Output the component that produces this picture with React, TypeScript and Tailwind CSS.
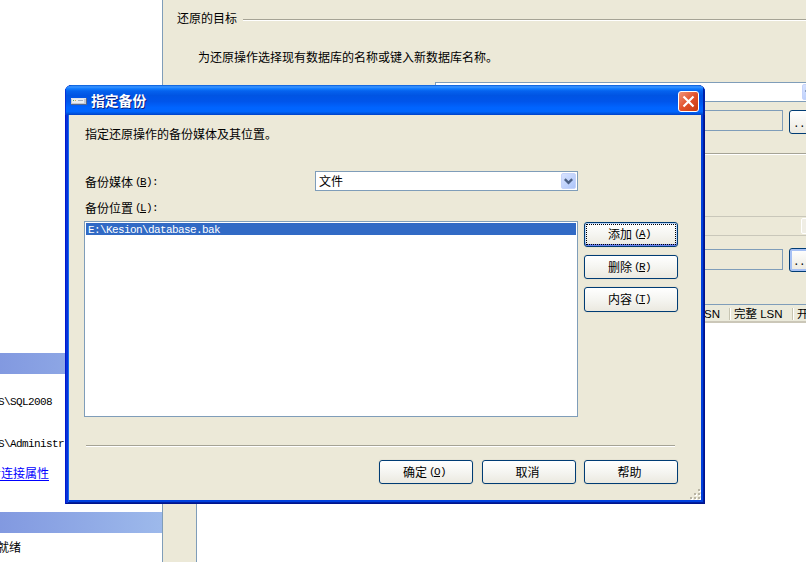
import type { ReactNode } from "react";
import clsx from "clsx";

const columns = ["完整 LSN", "开始日期"];

function Latin({ children }: { children: ReactNode }) {
  return (
    <span className="inline-block -translate-y-px font-['Liberation_Mono','Noto_Sans_CJK_SC',monospace] text-[11px] tracking-[-0.6px]">
      {children}
    </span>
  );
}

function Mnemonic({ letter, suffix = "" }: { letter: string; suffix?: string }) {
  return (
    <Latin>
      <span className="-mr-px">(</span>
      <span className="underline underline-offset-1">{letter}</span>){suffix}
    </Latin>
  );
}

function Etched({ className = "" }: { className?: string }) {
  return <div className={clsx("h-[2px] border-t border-b border-t-[#a5a395] border-b-white", className)} />;
}

type XpButtonProps = {
  label: string;
  letter?: string;
  focused?: boolean;
  className?: string;
};

function XpButton({ label, letter, focused, className }: XpButtonProps) {
  return (
    <button
      type="button"
      className={clsx(
        "flex w-[94px] shrink-0 items-center justify-center rounded-[3px] border border-[#003c74] bg-linear-to-b from-white via-[#f5f5f1] to-[#ebe9e0] p-px",
        focused
          ? "shadow-[0_0_0_1px_#e5e2d2,inset_0_-2px_0_#6982ee,inset_0_0_0_1px_#bcd4f6]"
          : "shadow-[0_0_0_1px_#e5e2d2]",
        className,
      )}
    >
      <span
        className={clsx(
          "flex h-full w-full items-center justify-center pr-[3px] pb-px",
          focused && "border border-dotted border-black",
        )}
      >
        {label}
        {letter && <span className="ml-[2px]"><Mnemonic letter={letter} /></span>}
      </span>
    </button>
  );
}

function DropArrow() {
  return (
    <span className="flex h-4 w-[15px] shrink-0 items-center justify-center rounded-[2px] border border-[#c5d3fa] bg-linear-to-br from-[#d8e3ff] to-[#adc5f9]">
      <svg className="shrink-0" width="9" height="7" viewBox="0 0 9 7" fill="none" stroke="#4d6185" strokeWidth="2.4">
        <path d="M0.8 1.2 4.5 4.9 8.2 1.2" />
      </svg>
    </span>
  );
}

function BrowseButton({ focused }: { focused?: boolean }) {
  return (
    <div
      className={clsx(
        "ml-[6px] h-6 w-[30px] shrink-0 rounded-[3px] border border-[#003c74] bg-linear-to-b from-white to-[#ebe9e0] pl-[3px] leading-[23px]",
        focused && "shadow-[inset_0_0_0_2px_#a6c0f4]",
      )}
    >
      <Latin>...</Latin>
    </div>
  );
}

function ConnectionPane() {
  return (
    <aside className="flex w-[163px] shrink-0 flex-col overflow-hidden border-r border-[#7f9db9] bg-white pt-[353px] whitespace-nowrap">
      <div className="h-[21px] shrink-0 bg-linear-to-r from-[#8299e0] to-[#9db9eb]" />
      <div className="mt-[19px] -ml-[2px] h-4 leading-4"><Latin>S\SQL2008</Latin></div>
      <div className="mt-[26px] -ml-[2px] h-4 leading-4"><Latin>S\Administr</Latin></div>
      <a className="mt-[14px] -ml-[11px] h-4 leading-4 text-[#0000ff] underline underline-offset-2">看连接属性</a>
      <div className="mt-[31px] h-[21px] shrink-0 bg-linear-to-r from-[#8299e0] to-[#9db9eb]" />
      <div className="mt-[6px] -ml-[3px] h-4 leading-4">就绪</div>
    </aside>
  );
}

function RestorePane() {
  return (
    <section className="flex min-w-0 flex-1 flex-col whitespace-nowrap">
      <div className="flex h-[21px] items-end pl-[14px]">
        <span className="mr-[6px] -mb-[5px] h-4 w-[60px] leading-4">还原的目标</span>
        <Etched className="flex-1" />
      </div>
      <p className="mt-[28px] h-4 pl-[35px] leading-4">为还原操作选择现有数据库的名称或键入新数据库名称。</p>

      <div className="mt-[17px] ml-[272px] flex h-5 w-[383px] border border-[#7f9db9] bg-white pt-px">
        <span className="flex-1" />
        <DropArrow />
      </div>

      <div className="mt-2 ml-[272px] flex h-6 w-[384px]">
        <div className="h-[21px] w-[348px] shrink-0 border border-[#7f9db9]" />
        <BrowseButton />
      </div>

      <Etched className="mt-[19px]" />

      <div className="mt-[61px] ml-[272px] flex h-5 w-[384px] border border-[#c9c7ba]">
        <span className="flex-1" />
        <span className="mt-px flex h-4 w-[17px] items-center rounded-[2px] border border-white bg-[#f0eee5] pl-1">
          <svg width="9" height="7" viewBox="0 0 9 7" fill="none" stroke="#c9c7ba" strokeWidth="2">
            <path d="M1 1.2 4.5 4.7 8 1.2" />
          </svg>
        </span>
      </div>

      <div className="mt-3 ml-[272px] flex h-[25px] w-[384px]">
        <div className="mt-px h-[21px] w-[348px] shrink-0 border border-[#7f9db9]" />
        <BrowseButton focused />
      </div>

      <div className="mt-[31px] ml-[33px] flex-1 border-t border-l border-[#7f9db9] bg-white">
        <div className="flex h-[18px] items-center overflow-hidden border-b-2 border-[#cbc7b8] bg-[#ebeadb] pt-[2px] font-['Liberation_Sans','Noto_Sans_CJK_SC',sans-serif] text-[11.5px] leading-[14px]">
          <span className="w-[523px] shrink-0 text-right">第一个 LSN</span>
          {columns.map((column, i) => (
            <span
              key={column}
              className={clsx(
                "flex h-3 shrink-0 items-center border-l border-[#c7c5b2] pl-1 shadow-[inset_1px_0_0_#ffffff]",
                i === 0 ? "ml-[9px] w-[63px]" : "w-20",
              )}
            >
              {column}
            </span>
          ))}
        </div>
      </div>
    </section>
  );
}

function DriveIcon() {
  return (
    <svg width="16" height="8" viewBox="0 0 16 8">
      <path d="M0 0h15v1H0z" fill="#dfe3ec" />
      <path d="M0 1h15v5H0z" fill="#c3c8d2" />
      <path d="M1 1h12v4H1z" fill="#e9edf2" />
      <path d="M15 0h1v7H0V6h15z" fill="#56678d" />
      <path d="M2 2h1v1H2z" fill="#4fa35c" />
      <path d="M4 2h1v1H4z" fill="#d9b23c" />
      <path d="M7 2h5v1H7z" fill="#a3adbf" />
    </svg>
  );
}

function SizeGrip() {
  const dots = [[8, 0], [4, 4], [8, 4], [0, 8], [4, 8], [8, 8]];
  return (
    <svg width="11" height="11" viewBox="0 0 11 11">
      {dots.map(([x, y]) => (
        <g key={`${x}-${y}`}>
          <rect x={x + 1} y={y + 1} width="2" height="2" fill="#ffffff" />
          <rect x={x} y={y} width="2" height="2" fill="#b8b4a3" />
        </g>
      ))}
    </svg>
  );
}

function BackupDialog() {
  return (
    <div className="absolute top-[85px] left-[65px] flex h-[419px] w-[640px] flex-col overflow-hidden rounded-t-[7px] bg-[#0040dd] whitespace-nowrap shadow-[inset_1px_0_0_#0019cf,inset_-1px_0_0_#00138c,inset_0_-1px_0_#00138c,inset_3px_0_0_#0831d9,inset_-2px_-2px_0_#001ea0,inset_4px_0_0_#166aee]">
      <header className="flex h-[30px] shrink-0 items-center bg-[linear-gradient(180deg,#0058d8_0%,#3d95ff_6%,#127dff_12%,#0562ee_20%,#0054e3_35%,#0055eb_55%,#0064ff_75%,#0066ff_88%,#005be8_93%,#0040c8_100%)] pt-[3px] pr-[6px] pl-[6px] shadow-[inset_1px_0_0_#0831d9,inset_-2px_0_0_#0020a8]">
        <DriveIcon />
        <h1 className="ml-1 flex-1 font-['Liberation_Sans','Noto_Sans_CJK_SC',sans-serif] text-[13.8px] leading-5 font-bold text-white [text-shadow:1px_1px_0_#0a1f82]">指定备份</h1>
        <button type="button" className="flex size-[21px] items-center justify-center rounded-[3px] border border-white bg-linear-to-br from-[#ee9278] via-[#e2512a] to-[#c63a0c]">
          <svg width="13" height="13" viewBox="0 0 13 13" stroke="#ffffff" strokeWidth="2.2">
            <path d="M1.5 1.5l10 10M11.5 1.5l-10 10" />
          </svg>
        </button>
      </header>

      <div className="mx-1 mb-1 flex min-h-0 flex-1 flex-col bg-[#ece9d8] pl-[15px]">
        <p className="mt-[11px] h-4 pl-px leading-4">指定还原操作的备份媒体及其位置。</p>

        <div className="mt-[29px] flex h-5 items-center">
          <label className="flex w-[231px] items-center pt-px pl-px leading-4">
            备份媒体<span className="ml-[2px]"><Mnemonic letter="B" suffix=":" /></span>
          </label>
          <div className="flex h-5 w-[263px] items-center border border-[#7f9db9] bg-white pr-px pl-[3px]">
            <span className="-mt-px flex-1 leading-4">文件</span>
            <DropArrow />
          </div>
        </div>
        <label className="mt-[9px] flex h-4 items-center pl-px leading-4">
          备份位置<span className="ml-[2px]"><Mnemonic letter="L" suffix=":" /></span>
        </label>

        <div className="mt-[5px] flex">
          <div className="h-[196px] w-[494px] border border-[#7f9db9] bg-white p-px">
            <div className="h-3 bg-[#316ac5] pl-[2px] leading-3 text-white">
              <Latin>E:\Kesion\database.bak</Latin>
            </div>
          </div>
          <div className="mt-px ml-[6px] flex flex-col gap-2">
            <XpButton label="添加" letter="A" focused className="h-[25px]" />
            <XpButton label="删除" letter="R" className="h-6" />
            <XpButton label="内容" letter="T" className="h-[25px]" />
          </div>
        </div>

        <Etched className="mt-7 ml-[2px] w-[589px] shrink-0" />

        <div className="mt-[13px] flex pl-[295px]">
          <XpButton label="确定" letter="O" className="h-6" />
          <XpButton label="取消" className="ml-[9px] h-6" />
          <XpButton label="帮助" className="ml-2 h-6" />
        </div>
        <div className="mt-[5px] flex justify-end">
          <SizeGrip />
        </div>
      </div>
    </div>
  );
}

export default function App() {
  return (
    <main className="relative flex h-[562px] w-[806px] overflow-hidden bg-[#ece9d8] font-['Noto_Sans_CJK_SC',sans-serif] text-[12px] text-black">
      <ConnectionPane />
      <RestorePane />
      <BackupDialog />
    </main>
  );
}
